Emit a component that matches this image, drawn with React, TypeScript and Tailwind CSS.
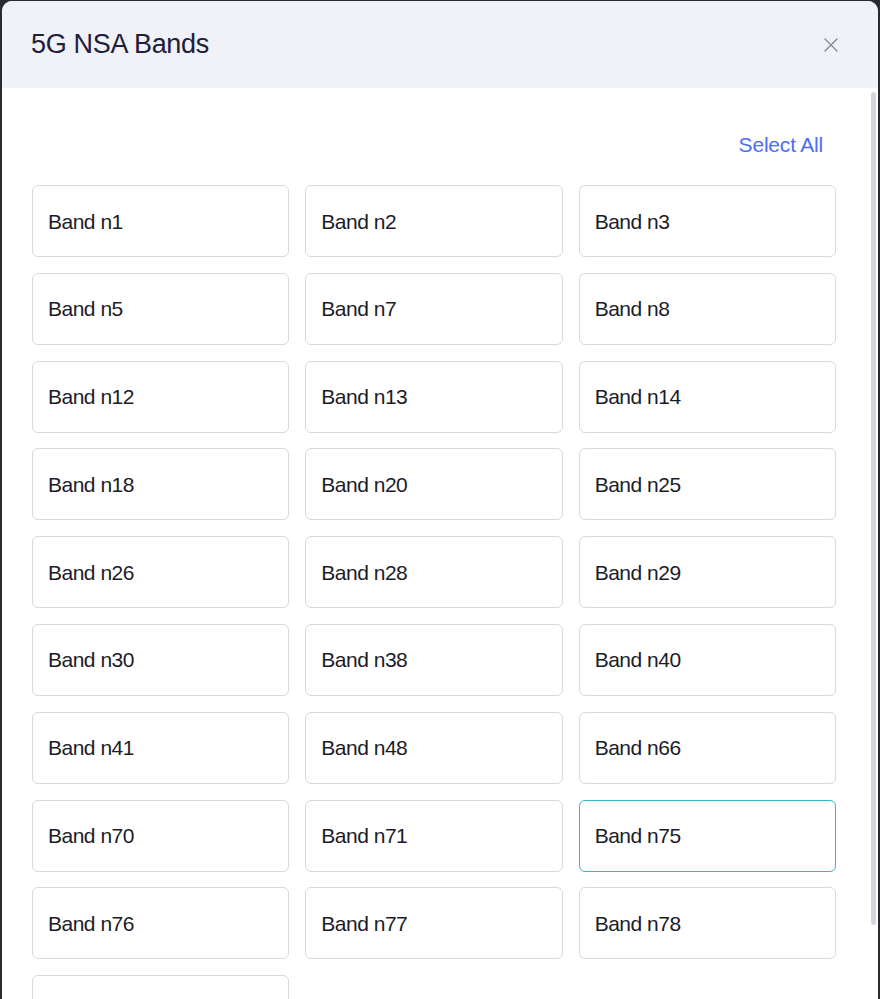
import { X } from "lucide-react";

const bands = [
  "n1", "n2", "n3", "n5", "n7", "n8", "n12", "n13", "n14", "n18", "n20", "n25",
  "n26", "n28", "n29", "n30", "n38", "n40", "n41", "n48", "n66", "n70", "n71",
  "n75", "n76", "n77", "n78", "n79",
];

function BandOption({ name, active }: { name: string; active?: boolean }) {
  return (
    <button
      type="button"
      className={`flex h-[72px] items-center rounded-[6px] border bg-white px-[15px] text-left text-[21px] leading-none tracking-[-0.5px] text-[#1c1c28] ${
        active ? "border-[#3bb4c4]" : "border-[#d9d9dd]"
      }`}
    >
      Band {name}
    </button>
  );
}

export default function App() {
  return (
    <div
      className="h-screen w-full overflow-hidden bg-[#2a2a33] px-[2px] pt-[1px]"
      style={{ fontFamily: '"Liberation Sans", Arial, sans-serif' }}
    >
      <div className="flex h-[1000px] flex-col overflow-hidden rounded-t-[10px] bg-white">
        <div className="flex h-[87px] shrink-0 items-center justify-between bg-[#f1f1f8] pl-[29px] pr-[35px]">
          <h2 className="text-[27px] tracking-[-0.3px] text-[#20203a]">5G NSA Bands</h2>
          <button type="button" className="text-[#8a8a94]">
            <X size={24} strokeWidth={1.4} />
          </button>
        </div>

        <div className="relative flex-1 overflow-hidden">
          {/* scroll thumb */}
          <div className="absolute right-[2px] top-[4px] h-[833px] w-[5px] rounded-full bg-[#d5d5dc]" />

          <div className="w-[834px] pl-[30px]">
            <div className="flex h-[97px] items-end justify-end pb-[25px]">
              <button type="button" className="px-[13px] text-[21px] tracking-[-0.2px] text-[#4d6ef0]">
                Select All
              </button>
            </div>
            <div className="grid grid-cols-3 gap-x-4 gap-y-[15.8px]">
              {bands.map((b) => (
                <BandOption key={b} name={b} active={b === "n75"} />
              ))}
            </div>
          </div>
        </div>
      </div>
    </div>
  );
}
